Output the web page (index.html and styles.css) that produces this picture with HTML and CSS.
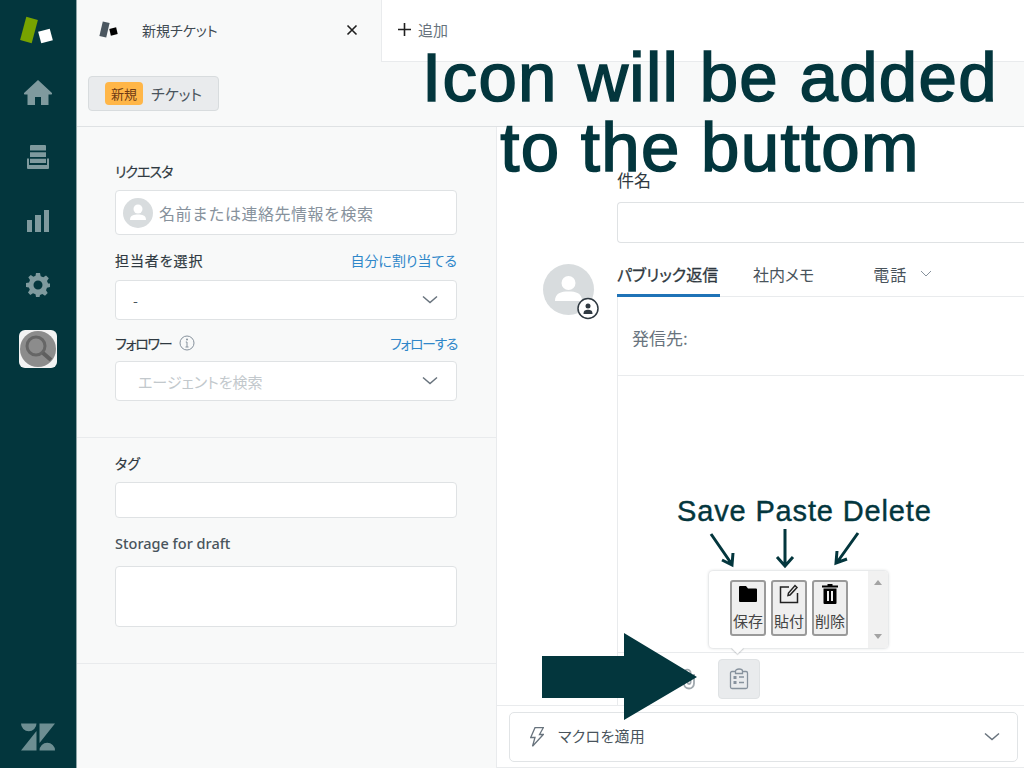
FILE: index.html
```html
<!DOCTYPE html>
<html lang="ja">
<head>
<meta charset="utf-8">
<title>新規チケット</title>
<link rel="stylesheet" href="styles.css">
</head>
<body>
<div class="app">
  <nav class="rail">
    <div class="rail-logo">
      <svg width="40" height="30" viewBox="0 0 40 30"><rect class="logo-green" x="5" y="2" width="12" height="24" transform="rotate(15 11 14)"/><rect class="logo-white" x="21.500" y="14" width="12" height="12" transform="rotate(-15 27.500 20)"/></svg>
    </div>
    <div class="rail-item"><svg width="30" height="26" viewBox="0 0 30 26"><path class="rail-ic" d="M15 0 L29 13 Q29.500 14.500 28 14.500 L25.500 14.500 V25 H18 V17 H12 V25 H4.500 V14.500 H2 Q.5 14.500 1 13 Z"/></svg></div>
    <div class="rail-item"><svg width="22" height="24" viewBox="0 0 22 24"><path class="rail-ic" d="M4 0 H18 A1 1 0 0 1 19 1 V5.500 H3 V1 A1 1 0 0 1 4 0 Z M3 7.300 H19 V12 H3 Z M3 13.800 H19 V18 H3 Z M0 13.500 H2 V20 H20 V13.500 H22 V23 A1 1 0 0 1 21 24 H1 A1 1 0 0 1 0 23 Z"/></svg></div>
    <div class="rail-item"><svg width="22" height="22" viewBox="0 0 22 22"><path class="rail-ic" d="M0 10 H5 V22 H0 Z M8 5 H14 V22 H8 Z M17 0 H22 V22 H17 Z"/></svg></div>
    <div class="rail-item"><svg width="24" height="24" viewBox="0 0 24 24"><path class="rail-ic" fill-rule="evenodd" d="M10 0 H14 L14.700 3.200 L17.300 4.300 L20 2.500 L22.800 5.300 L21 8 L22.100 10.600 L24 10.500 V14 L21 14.700 L20 17.300 L21.700 20 L19 22.700 L16.300 21 L14 22 L13.500 24 H10 L9.500 21.200 L7 20.200 L4.300 22 L2 19.500 L3.800 16.800 L2.900 14.500 L0 14 V10 L3 9.400 L4 7 L2.300 4.300 L4.800 2 L7.400 3.700 L9.500 2.800 Z M12 7.500 A4.500 4.500 0 1 0 12 16.500 A4.500 4.500 0 1 0 12 7.500 Z"/></svg></div>
    <div class="rail-item">
      <div class="rail-app"><svg width="38" height="38" viewBox="0 0 38 38"><circle class="app-bg" cx="19" cy="19" r="18"/><circle class="app-lens" cx="17" cy="16" r="9"/><path class="app-handle" d="M24 23 L32 30"/></svg></div>
    </div>
    <div class="rail-foot"><svg width="34" height="28" viewBox="0 0 34 28"><path class="z-ic" d="M0 .5 H15.500 A7.750 7.750 0 0 1 0 .5 Z M18.500 .5 H34 L18.500 20 Z M15.500 8 V27.500 H0 Z M18.500 27.500 A7.750 7.750 0 0 1 34 27.500 Z"/></svg></div>
  </nav>

  <div class="main">
    <header class="tabbar">
      <div class="tab">
        <svg class="tab-logo" width="22" height="20" viewBox="0 0 22 20"><rect class="mini-a" x="3" y="2" width="7" height="15" transform="rotate(13 6.500 9.500)"/><rect class="mini-b" x="12" y="8" width="7" height="7" transform="rotate(-13 15.500 11.500)"/></svg>
        <span class="tab-title">新規チケット</span>
        <span class="tab-close"><svg width="12" height="12" viewBox="0 0 12 12"><path class="x-ic" d="M1.500 1.500 L10.500 10.500 M10.500 1.500 L1.500 10.500"/></svg></span>
      </div>
      <div class="addtab">
        <svg width="13" height="13" viewBox="0 0 13 13"><path class="x-ic" d="M6.500 0 V13 M0 6.500 H13"/></svg>
        <span class="add-label">追加</span>
      </div>
    </header>

    <div class="subbar">
      <div class="crumb"><span class="badge">新規</span><span class="crumb-text">チケット</span></div>
    </div>

    <div class="content">
      <aside class="side">
        <section class="group group-a">
          <div class="label-row label-first"><label class="label label-kana">リクエスタ</label></div>
          <div class="field field-req">
            <svg width="30" height="30" viewBox="0 0 30 30"><circle class="av-bg" cx="15" cy="15" r="15"/><circle class="av-fg" cx="15" cy="11" r="4.500"/><path class="av-fg" d="M7 22 C7 17 11 16.500 15 16.500 C19 16.500 23 17 23 22 Z"/></svg>
            <span class="ph">名前または連絡先情報を検索</span>
          </div>
          <div class="label-row label-assignee"><label class="label label-wide">担当者を選択</label><a class="link">自分に割り当てる</a></div>
          <div class="field field-sel">
            <span class="val">-</span>
            <svg class="chev" width="16" height="10" viewBox="0 0 16 10"><path class="chev-p" d="M1 1.500 L8 7.500 L15 1.500"/></svg>
          </div>
          <div class="label-row label-follower"><label class="label"><span class="label-kana-tight">フォロワー</span><svg class="info" width="16" height="16" viewBox="0 0 16 16"><circle class="info-c" cx="8" cy="8" r="7"/><path class="info-c" d="M8 7 V12 M6.500 12 H9.500 M6.800 7 H8"/><circle class="info-d" cx="8" cy="4.500" r="1"/></svg></label><a class="link link-tight">フォローする</a></div>
          <div class="field field-sel field-follow">
            <span class="ph-light">エージェントを検索</span>
            <svg class="chev" width="16" height="10" viewBox="0 0 16 10"><path class="chev-p" d="M1 1.500 L8 7.500 L15 1.500"/></svg>
          </div>
        </section>
        <section class="group group-b">
          <div class="label-row label-tag"><label class="label">タグ</label></div>
          <div class="field field-tag"></div>
          <div class="label-row label-draft"><label class="label label-en">Storage for draft</label></div>
          <div class="field field-draft"></div>
        </section>
      </aside>

      <div class="pane">
        <div class="subject">
          <div class="subject-label">件名</div>
          <div class="field field-subject"></div>
        </div>
        <div class="reply">
          <div class="avatar">
            <svg width="60" height="60" viewBox="0 0 60 60"><circle class="av-bg" cx="25.500" cy="25.500" r="25.500"/><circle class="av-fg" cx="25.500" cy="19" r="7"/><path class="av-fg" d="M12 37 C12 29 18 27.500 25.500 27.500 C33 27.500 39 29 39 37 Z"/><circle class="badge-c" cx="45" cy="44.500" r="10"/><circle class="badge-f" cx="45" cy="42" r="2.500"/><path class="badge-f" d="M40.500 50 C40.500 46.500 42.500 45.800 45 45.800 C47.500 45.800 49.500 46.500 49.500 50 Z"/></svg>
          </div>
          <div class="composer">
            <div class="tabs">
              <span class="ctab ctab-on">パブリック返信</span>
              <span class="ctab ctab-memo">社内メモ</span>
              <span class="ctab ctab-call">電話<svg class="chev-s" width="12" height="8" viewBox="0 0 12 8"><path class="chev-t" d="M1 1 L6 6 L11 1"/></svg></span>
            </div>
            <div class="editor">
              <div class="to">発信先:</div>
              <div class="body"></div>
              <div class="toolbar">
                <svg class="clip" width="16" height="22" viewBox="0 0 16 22"><path class="clip-p" d="M13 6 V15.500 A5 5 0 0 1 3 15.500 V5 A3.300 3.300 0 0 1 9.600 5 V14.500 A1.500 1.500 0 0 1 6.600 14.500 V7"/></svg>
                <div class="tool-btn"><svg width="20" height="22" viewBox="0 0 20 22"><path class="tool-p" d="M6.500 3.500 H3 A1.500 1.500 0 0 0 1.500 5 V19 A1.500 1.500 0 0 0 3 20.500 H17 A1.500 1.500 0 0 0 18.500 19 V5 A1.500 1.500 0 0 0 17 3.500 H13.500 M6.500 5.500 V3 A3.500 2 0 0 1 13.500 3 V5.500 Z M10 9 H15 M10 14.500 H15"/><rect class="tool-f" x="4.500" y="8" width="3" height="3"/><rect class="tool-f" x="4.500" y="13" width="3" height="3"/></svg></div>
                <div class="popup">
                  <div class="pop-list">
                    <div class="pop-btn"><svg width="20" height="20" viewBox="0 0 20 20"><path class="ic-black" d="M1 3 A1 1 0 0 1 2 2 H8 L10 4.500 H18 A1 1 0 0 1 19 5.500 V17 A1 1 0 0 1 18 18 H2 A1 1 0 0 1 1 17 Z"/></svg><span class="pop-txt">保存</span></div>
                    <div class="pop-btn"><svg width="22" height="20" viewBox="0 0 22 20"><path class="ic-line" d="M11 3 H2.500 V18.500 H19.500 V9 M12 11 L10 11.500 L10.500 9 L17 1.500 L19 3.500 Z"/></svg><span class="pop-txt">貼付</span></div>
                    <div class="pop-btn"><svg width="20" height="20" viewBox="0 0 20 20"><path class="ic-black" fill-rule="evenodd" d="M7.500 0 H12.500 V1.500 H18 V3.500 H2 V1.500 H7.500 Z M3.500 4.500 H16.500 V19 A1 1 0 0 1 15.500 20 H4.500 A1 1 0 0 1 3.500 19 Z M7 7 V17 H9 V7 Z M11 7 V17 H13 V7 Z"/></svg><span class="pop-txt">削除</span></div>
                  </div>
                  <div class="pop-scroll"><span class="tri-up"></span><span class="tri-down"></span></div>
                  <span class="pop-caret"></span>
                </div>
              </div>
            </div>
          </div>
        </div>
        <div class="macro-bar">
          <div class="macro">
            <svg width="14" height="20" viewBox="0 0 14 20"><path class="bolt" d="M5 .7 H13.300 L9.500 7.500 H13.300 L2.500 19.300 L5 10.500 H.7 Z"/></svg>
            <span class="macro-txt">マクロを適用</span>
            <svg class="macro-chev" width="16" height="10" viewBox="0 0 16 10"><path class="chev-p" d="M1 1.500 L8 7.500 L15 1.500"/></svg>
          </div>
        </div>
      </div>
    </div>
  </div>
</div>

<div class="note-head">Icon will be added<br>to the buttom</div>
<div class="note-keys">Save Paste Delete</div>
<svg class="note-art" width="1024" height="768" viewBox="0 0 1024 768">
  <polygon class="art-fill" points="542,656 624,656 624,633 697,677 624,720 624,698 542,698"/>
  <path class="art-line" d="M711 534 L731 563 M722 560 L732 565 L733 553 M785 529 V565 M777 557 L785 566 L793 557 M858 533 L838 561 M837 551 L836 563 L847 559"/>
</svg>
</body>
</html>
```
FILE: styles.css
```css
* { box-sizing: border-box; }
html, body { margin: 0; height: 100%; overflow: hidden; }
body { font-family: "Noto Sans CJK JP", "Liberation Sans", sans-serif; color: #2f3941; background: #fff; }

.app { display: flex; width: 1024px; height: 768px; }

/* rail */
.rail { width: 77px; flex: none; display: flex; flex-direction: column; align-items: stretch; background: #03363d; border-right: 1px solid #8fa5a8; }
.rail-logo { height: 61px; display: flex; align-items: center; justify-content: center; }
.rail-item { height: 64px; display: flex; align-items: center; justify-content: center; }
.rail-foot { margin-top: auto; height: 62px; display: flex; align-items: center; justify-content: center; padding-bottom: 1px; }
.rail-ic { fill: #7f9a9e; }
.z-ic { fill: #6d8e92; }
.logo-green { fill: #78a300; }
.logo-white { fill: #fff; }
.rail-app { width: 38px; height: 38px; border-radius: 6px; background: #f3f3f3; }
.app-bg { fill: #8c8c8c; }
.app-lens { fill: none; stroke: #666; stroke-width: 3; }
.app-handle { fill: none; stroke: #5f5f5f; stroke-width: 4; }

/* main */
.main { flex: 1; min-width: 0; display: flex; flex-direction: column; background: #f8f9f9; }
.tabbar { height: 62px; flex: none; display: flex; }
.tab { width: 304px; flex: none; display: flex; align-items: center; padding: 0 23px 2px 21px; }
.tab-logo { flex: none; }
.tab-title { margin-left: 22px; font-size: 14px; font-feature-settings: "palt"; color: #3f4a52; }
.tab-close { margin-left: auto; display: flex; }
.x-ic { fill: none; stroke: #1f1f1f; stroke-width: 1.600; }
.mini-a { fill: #4b5760; }
.mini-b { fill: #000; }
.addtab { flex: 1; display: flex; align-items: center; padding: 0 0 2px 16px; background: #fff; border-left: 1px solid #e9ebed; border-bottom: 1px solid #e9ebed; }
.add-label { margin-left: 7px; font-size: 15px; color: #68737d; }

.subbar { height: 65px; flex: none; padding-top: 14px; padding-left: 11px; border-bottom: 1px solid #dfe2e4; }
.crumb { display: inline-flex; align-items: center; width: 131px; height: 35px; padding-left: 16px; background: #e9ebed; border: 1px solid #d8dcde; border-radius: 4px; }
.badge { width: 38px; height: 23px; display: flex; align-items: center; justify-content: center; background: #ffb648; border-radius: 4px; font-size: 13px; color: #703b15; }
.crumb-text { margin-left: 8px; font-size: 15px; font-feature-settings: "palt"; color: #49545c; }

.content { flex: 1; min-height: 0; display: flex; }

/* side */
.side { width: 420px; flex: none; border-right: 1px solid #e9ebed; }
.group { padding: 0 39px 0 38px; border-bottom: 1px solid #e9ebed; }
.group-a { height: 311px; padding-top: 34px; }
.group-b { height: 226px; padding-top: 15px; }
.label-row { display: flex; align-items: center; justify-content: space-between; height: 20px; }
.label-first { margin-bottom: 9px; }
.label-assignee { margin-top: 15px; margin-bottom: 10px; }
.label-follower { margin-top: 13px; margin-bottom: 8px; }
.label-tag { margin-bottom: 9px; }
.label-draft { margin-top: 15px; margin-bottom: 13px; }
.label { display: flex; align-items: center; font-size: 14px; font-weight: 400; font-feature-settings: "palt"; color: #2f3941; -webkit-text-stroke: .2px #2f3941; }
.label-kana { letter-spacing: -1px; }
.label-kana-tight { letter-spacing: -1.200px; }
.label-wide { letter-spacing: .9px; }
.label-en { font-family: "Noto Sans", sans-serif; font-size: 14.500px; color: #49545c; -webkit-text-stroke: 0; font-weight: 500; }
.info { margin-left: 7px; }
.info-c { fill: none; stroke: #87929d; stroke-width: 1; }
.info-d { fill: #87929d; }
.link { font-size: 14px; font-feature-settings: "palt"; color: #2f87c9; }
.link-tight { letter-spacing: -1.400px; }
.field { display: flex; align-items: center; background: #fff; border: 1px solid #dfe2e4; border-radius: 4px; }
.field-req { height: 45px; padding-left: 7px; }
.field-sel { height: 40px; padding: 0 18px 0 17px; justify-content: space-between; }
.field-tag { height: 36px; }
.field-draft { height: 61px; }
.ph { margin-left: 6px; font-size: 16px; letter-spacing: .5px; color: #87929d; }
.ph-light { margin-left: 5px; font-size: 15px; font-feature-settings: "palt"; color: #c2c8cc; }
.val { font-size: 14px; color: #49545c; }
.chev-p { fill: none; stroke: #68737d; stroke-width: 1.500; }
.av-bg { fill: #d8dcde; }
.av-fg { fill: #fff; }

/* right pane */
.pane { flex: 1; min-width: 0; display: flex; flex-direction: column; background: #fff; overflow: hidden; }
.subject { flex: none; padding: 43px 0 0 120px; }
.subject-label { height: 20px; font-size: 17px; line-height: 20px; color: #2f3941; }
.field-subject { margin-top: 12px; height: 41px; border-right: 0; border-radius: 4px 0 0 4px; }
.reply { flex: 1; min-height: 0; display: flex; margin-top: 12px; padding-left: 46px; }
.avatar { width: 74px; flex: none; padding-top: 9px; }
.badge-c { fill: #fff; stroke: #2f3941; stroke-width: 1.500; }
.badge-f { fill: #2f3941; }
.composer { flex: 1; min-width: 0; display: flex; flex-direction: column; }
.tabs { height: 42px; flex: none; display: flex; border-bottom: 1px solid #e9ebed; }
.ctab { display: flex; align-items: center; height: 42px; padding-bottom: 4px; font-size: 16px; color: #49545c; font-feature-settings: "palt"; }
.ctab-on { width: 103px; color: #2f3941; -webkit-text-stroke: .3px #2f3941; border-bottom: 3px solid #1f73b7; padding-bottom: 2px; white-space: nowrap; }
.ctab-memo { margin-left: 33px; }
.ctab-call { margin-left: 59px; letter-spacing: 1px; }
.chev-s { margin-left: 13px; }
.chev-t { fill: none; stroke: #87929d; stroke-width: 1; }
.editor { flex: 1; min-height: 0; display: flex; flex-direction: column; border-left: 1px solid #e9ebed; }
.to { height: 79px; flex: none; display: flex; align-items: center; padding: 3px 0 0 14px; font-size: 17px; color: #68737d; border-bottom: 1px solid #e9ebed; }
.body { flex: 1; min-height: 0; }
.toolbar { position: relative; height: 53px; flex: none; display: flex; align-items: center; border-top: 1px solid #e9ebed; padding: 0 0 0 63px; }
.clip { flex: none; }
.clip-p { fill: none; stroke: #a0a8ae; stroke-width: 1.800; }
.tool-btn { width: 42px; height: 40px; margin-left: 21px; display: flex; align-items: center; justify-content: center; background: #e9ebed; border: 1px solid #dfe2e4; border-radius: 4px; }
.tool-p { fill: none; stroke: #87929d; stroke-width: 1.300; }
.tool-f { fill: #87929d; }

/* popup */
.popup { position: absolute; left: 91px; bottom: 57px; width: 179px; height: 77px; display: flex; justify-content: space-between; background: #fff; border-radius: 4px; box-shadow: 0 0 3px rgba(47, 57, 65, .3); }
.pop-list { display: flex; gap: 5px; padding: 9px 0 0 21px; }
.pop-btn { width: 36px; height: 56px; display: flex; flex-direction: column; align-items: center; padding-top: 2px; background: #efefef; border: 2px solid #9a9a9a; border-radius: 3px; }
.pop-txt { margin-top: 7px; font-size: 15px; line-height: 20px; color: #444; white-space: nowrap; }
.ic-black { fill: #000; }
.ic-line { fill: none; stroke: #222; stroke-width: 1.500; }
.pop-scroll { position: relative; width: 20px; background: #f1f1f1; border-radius: 0 4px 4px 0; }
.tri-up { position: absolute; left: 6px; top: 9px; border: 4px solid transparent; border-top: 0; border-bottom: 5px solid #a3a3a3; }
.tri-down { position: absolute; left: 6px; bottom: 9px; border: 4px solid transparent; border-bottom: 0; border-top: 5px solid #a3a3a3; }
.pop-caret { position: absolute; left: 24px; bottom: -4px; width: 9px; height: 9px; background: #fff; transform: rotate(45deg); box-shadow: 1px 1px 1px rgba(47, 57, 65, .2); }

/* macro */
.macro-bar { height: 63px; flex: none; padding: 6px 6px 0 12px; border-top: 1px solid #e9ebed; border-bottom: 1px solid #e9ebed; }
.macro { height: 50px; display: flex; align-items: center; padding: 0 17px 0 20px; background: #fff; border: 1px solid #e1e4e6; border-radius: 5px; }
.bolt { fill: none; stroke: #68737d; stroke-width: 1.300; }
.macro-txt { margin-left: 14px; padding-bottom: 3px; font-size: 15px; font-feature-settings: "palt"; letter-spacing: .3px; color: #49545c; }
.macro-chev { margin-left: auto; }

/* annotations laid over the screenshot */
.note-head { position: absolute; left: 396px; top: 43px; width: 628px; text-align: center; font-family: "Liberation Sans", sans-serif; font-size: 69px; line-height: 70px; letter-spacing: 1.300px; color: #03363d; -webkit-text-stroke: 1.600px #03363d; white-space: nowrap; }
.note-keys { position: absolute; left: 677px; top: 494px; font-family: "Liberation Sans", sans-serif; font-size: 29px; line-height: 34px; letter-spacing: .85px; color: #03363d; -webkit-text-stroke: .4px #03363d; white-space: nowrap; }
.note-art { position: absolute; left: 0; top: 0; pointer-events: none; }
.art-fill { fill: #03363d; }
.art-line { fill: none; stroke: #03363d; stroke-width: 3; }
```
